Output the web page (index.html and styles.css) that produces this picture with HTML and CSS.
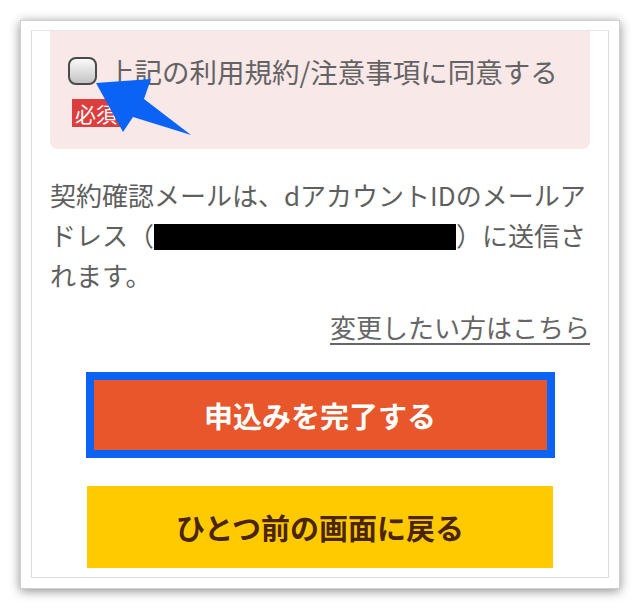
FILE: index.html
```html
<!DOCTYPE html>
<html lang="ja">
<head>
    <meta charset="UTF-8">
    <meta name="viewport" content="width=device-width, initial-scale=1.0">
    <title>申込み確認</title>
    <link rel="stylesheet" href="styles.css">
</head>
<body>
    <div class="frame">
        <div class="screen">
            <!-- 同意チェック -->
            <div class="agree-box">
                <label class="agree-row">
                    <input type="checkbox" class="agree-check">
                    <span class="agree-text">上記の利用規約/注意事項に同意する</span>
                </label>
                <span class="badge">必須</span>
                <svg class="pointer" width="110" height="70" viewBox="0 0 110 70">
                    <polygon points="6,12 61,8 54,28 101,64 43,46 33,61" fill="#0b63f6"/>
                </svg>
            </div>

            <p class="mail-note">契約確認メールは、dアカウントIDのメールアドレス（<span class="masked"></span>）に送信されます。</p>
            <div class="change-link"><a href="#">変更したい方はこちら</a></div>

            <div class="actions">
                <button class="btn btn-submit">申込みを完了する</button>
                <button class="btn btn-back">ひとつ前の画面に戻る</button>
            </div>
        </div>
    </div>
</body>
</html>
```

FILE: styles.css
```css
/* General */
body {
    margin: 0;
    padding: 0;
    background-color: #ffffff;
    font-family: "Noto Sans CJK JP", "Noto Sans", sans-serif;
    color: #5f5f5f;
}

/* Photo frame */
.frame {
    box-sizing: border-box;
    width: 600px;
    height: 569px;
    margin: 20px;
    padding: 9px 10px 10px;
    background-color: #ffffff;
    border: 1px solid #d0d0d0;
    box-shadow: 0 2px 10px rgba(0, 0, 0, 0.45);
}

.screen {
    box-sizing: border-box;
    height: 548px;
    padding: 0 18px;
    border: 1px solid #dcdcdc;
    border-top-color: #e6e6e6;
    overflow: hidden;
}

/* Agree box */
.agree-box {
    position: relative;
    background-color: #f9e8e8;
    border-radius: 0 0 8px 8px;
    padding: 20px 18px 22px;
}

.agree-row {
    display: flex;
    align-items: center;
    height: 40px;
}

.agree-check {
    appearance: none;
    -webkit-appearance: none;
    box-sizing: border-box;
    width: 29px;
    height: 28px;
    margin: 0 10px 0 0;
    border: 2px solid #4a4a4a;
    border-radius: 8px;
    background: linear-gradient(#fafafa, #c4c4c4);
}

.agree-text {
    font-size: 27.5px;
    line-height: 40px;
    color: #636363;
}

.badge {
    display: inline-block;
    margin: 8px 0 0 4px;
    padding: 0 3px;
    height: 28px;
    line-height: 28px;
    font-size: 21px;
    color: #ffffff;
    background-color: #dc3d3d;
}

.pointer {
    position: absolute;
    left: 40px;
    top: 40px;
}

/* Mail note */
.mail-note {
    margin: 26px 0 0;
    font-size: 26px;
    line-height: 40px;
}

.masked {
    display: inline-block;
    width: 302px;
    height: 26px;
    vertical-align: -4px;
    background-color: #000000;
}

.change-link {
    margin-top: 12px;
    text-align: right;
    font-size: 26px;
    line-height: 40px;
}

.change-link a {
    color: #666666;
    text-decoration: underline;
    text-underline-offset: 5px;
    text-decoration-thickness: 2px;
}

/* Buttons */
.actions {
    display: flex;
    flex-direction: column;
    align-items: center;
    gap: 28px;
    margin-top: 25px;
}

.btn {
    font-family: "Noto Sans CJK JP", sans-serif;
    font-size: 29px;
    font-weight: bold;
    border: none;
    padding: 0;
    cursor: pointer;
}

.btn-submit {
    width: 469px;
    height: 86px;
    color: #ffffff;
    background-color: #e8562b;
    border: 8px solid #0b63f6;
}

.btn-back {
    width: 466px;
    height: 82px;
    color: #4a2500;
    background-color: #ffcb00;
}
```
